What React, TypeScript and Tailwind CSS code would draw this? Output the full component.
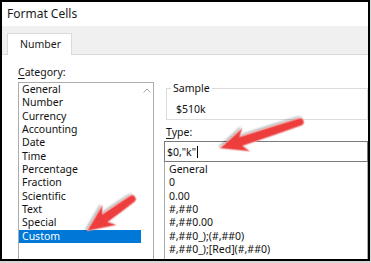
const categories = [
  "General",
  "Number",
  "Currency",
  "Accounting",
  "Date",
  "Time",
  "Percentage",
  "Fraction",
  "Scientific",
  "Text",
  "Special",
  "Custom",
];

const types = [
  "General",
  "0",
  "0.00",
  "#,##0",
  "#,##0.00",
  "#,##0_);(#,##0)",
  "#,##0_);[Red](#,##0)",
];

function Arrow({ x, y, angle, length }: { x: number; y: number; angle: number; length: number }) {
  const L = length;
  const d = `M0,-3.8 L${L - 22},-4.8 L${L - 27},-12 L${L},0 L${L - 27},12 L${L - 22},4.8 L0,3.8 A3.8,3.8 0 0 1 0,-3.8 Z`;
  return (
    <path
      d={d}
      transform={`translate(${x} ${y}) rotate(${angle})`}
      fill="#ee3d3d"
      stroke="#f6a3a3"
      strokeWidth="0.8"
      filter="url(#shadow)"
    />
  );
}

export default function App() {
  return (
    <div
      className="relative w-[371px] h-[263px] bg-[#d6d6d6] overflow-hidden text-black"
      style={{ fontFamily: '"Segoe UI", "Noto Sans", sans-serif' }}
    >
      <div className="w-[370px] h-[261px] border-2 border-black bg-white overflow-hidden flex flex-col">
        {/* title */}
        <div className="h-[24px] pl-[5px] flex items-center text-[12px] text-[#1a1a1a]">
          Format Cells
        </div>

        {/* tab strip */}
        <div className="h-[29px] bg-[#f0f0f0] border-b border-[#dadada] flex items-end shrink-0">
          <div className="ml-[5px] mb-[-1px] w-[65px] h-[22px] bg-white border border-[#dadada] border-b-0 flex items-center pl-[12px] text-[10.5px] text-[#1a1a1a]">
            Number
          </div>
        </div>

        <div className="flex flex-1 min-h-0 text-[10.5px] leading-[14px] text-[#111]">
          {/* category column */}
          <div className="ml-[16px] w-[140px] flex flex-col">
            <div className="mt-[10px] h-[14px]">
              <span className="underline underline-offset-2">C</span>ategory:
            </div>
            <div className="mt-[3px] flex-1 border border-[#acacac] border-b-0 flex">
              <ul className="w-[122px]">
                {categories.map((c) => (
                  <li
                    key={c}
                    className={
                      c === "Custom"
                        ? "h-[13.33px] leading-[13.33px] pl-[3px] bg-[#0078d7] text-white"
                        : "h-[13.33px] leading-[13.33px] pl-[3px]"
                    }
                  >
                    {c}
                  </li>
                ))}
              </ul>
              <div className="flex-1 flex justify-center pt-[5px]">
                <svg width="8" height="5" viewBox="0 0 8 5">
                  <path d="M0.5 4.5 L4 1 L7.5 4.5" fill="none" stroke="#a8a8a8" strokeWidth="1" />
                </svg>
              </div>
            </div>
          </div>

          {/* type column */}
          <div className="ml-[10px] w-[210px] flex flex-col">
            <fieldset className="mt-[26px] ml-[2px] border border-[#dcdcdc] pb-[3px]">
              <legend className="ml-[4px] px-[2px] h-[14px]">Sample</legend>
              <div className="pl-[9px] pt-[7px]">$510k</div>
            </fieldset>
            <div className="mt-[5px] ml-[2px] h-[14px]">
              <span className="underline underline-offset-2">T</span>ype:
            </div>
            <div className="mt-[2px] h-[21px] border border-[#7a7a7a] flex items-center pl-[2px]">
              $0,"k"
              <span className="ml-[1px] h-[12px] border-l border-black" />
            </div>
            <ul className="flex-1 border border-[#acacac] border-t-0 border-b-0 pt-[1px]">
              {types.map((t, i) => (
                <li key={i} className="h-[13.33px] leading-[13.33px] pl-[4px]">
                  {t}
                </li>
              ))}
            </ul>
          </div>
        </div>
      </div>

      <svg className="absolute inset-0 pointer-events-none" width="371" height="263">
        <defs>
          <filter id="shadow" x="-20%" y="-20%" width="140%" height="140%">
            <feDropShadow dx="1" dy="1.5" stdDeviation="1" floodColor="#000" floodOpacity="0.35" />
          </filter>
        </defs>
        <Arrow x={300} y={122} angle={161.8} length={84} />
        <Arrow x={132} y={199} angle={144.6} length={55} />
      </svg>
    </div>
  );
}
